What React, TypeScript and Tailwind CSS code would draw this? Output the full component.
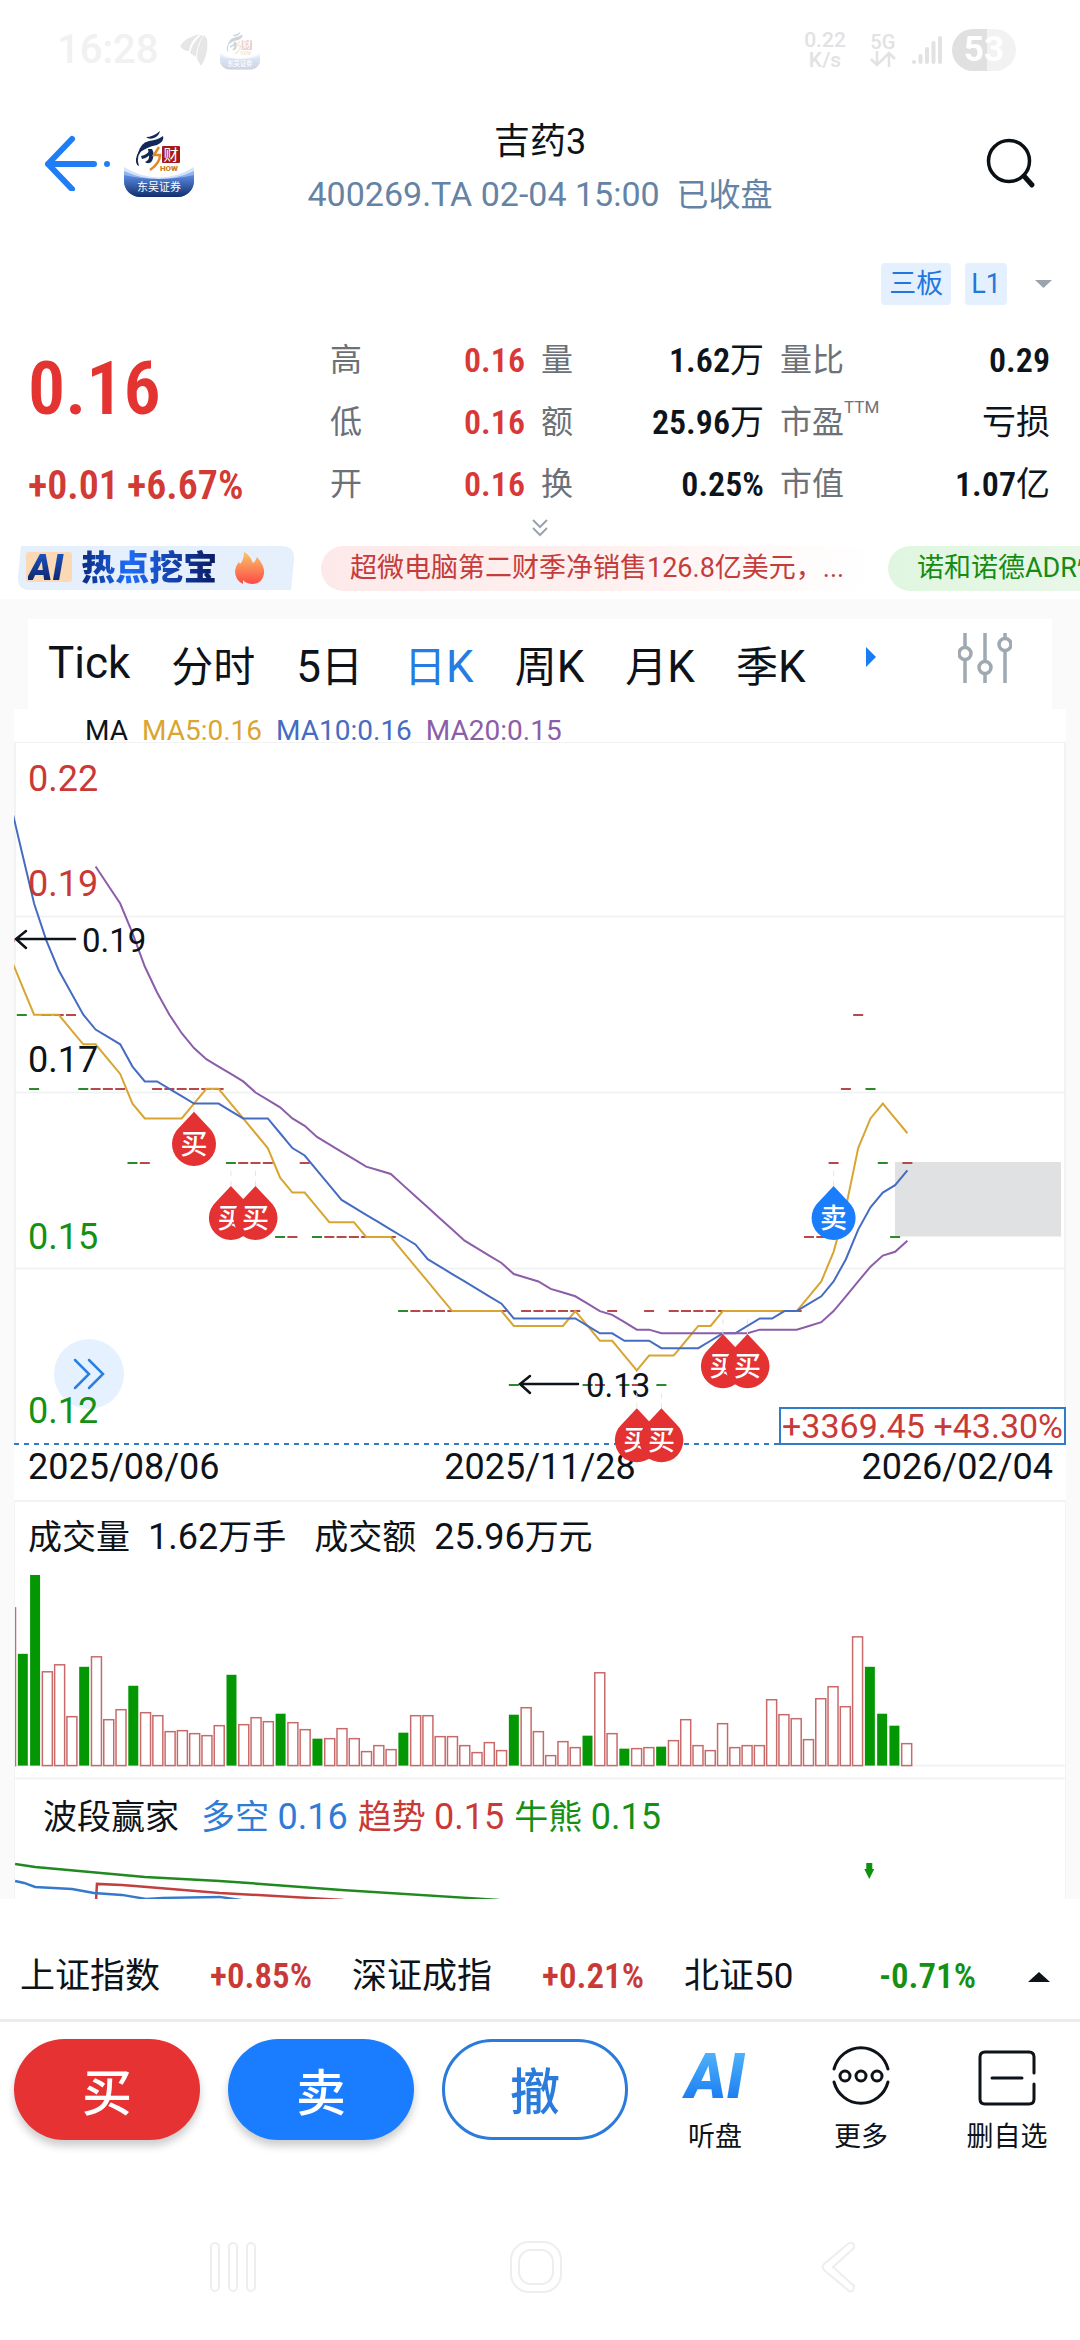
import React from 'react';
import clsx from 'clsx';

const RED = '#c93a37';
const GREEN = '#149114';

// close prices in cents, oldest first; the first 12 are left of the visible area
const CLOSES = [
  22, 22, 24, 25, 24, 23, 22, 21, 20, 19, 18, 18,
  19, 18, 17, 18, 18, 18, 17, 17, 17, 17, 16, 16, 17, 17, 17, 17, 17, 17, 16,
  16, 16, 16, 15, 15, 16, 15, 15, 15, 15, 15, 15, 15, 14, 14, 14, 14, 14, 14,
  14, 14, 14, 13, 14, 14, 14, 14, 14, 13, 13, 14, 13, 13, 14, 13, 14, 14, 14,
  14, 14, 14, 14, 14, 14, 14, 14, 15, 15, 16, 17, 18, 17, 16, 15, 16,
];
const HIDDEN = 12;

const VOLUMES = [
  158, 112, 191, 94, 101, 49, 99, 109, 46, 56, 80, 53, 50, 34, 35, 32, 30, 40,
  91, 41, 48, 44, 52, 43, 36, 27, 27, 37, 27, 14, 20, 16, 33, 50, 50, 29, 29,
  20, 13, 23, 15, 51, 58, 34, 10, 24, 18, 30, 93, 32, 17, 17, 18, 19, 25, 46,
  20, 15, 42, 18, 20, 20, 66, 51, 47, 26, 67, 79, 59, 129, 99, 52, 40, 22,
];
const DOWN_DAYS = [1, 2, 6, 10, 18, 22, 25, 32, 41, 47, 50, 53, 70, 71, 72];

const TRADES = [
  { day: 15, side: '买' },
  { day: 18, side: '买' },
  { day: 20, side: '买' },
  { day: 51, side: '买' },
  { day: 53, side: '买' },
  { day: 58, side: '买' },
  { day: 60, side: '买' },
  { day: 67, side: '卖' },
];

const xOf = (day: number) => day * 12.3 - 4.5;
const yOf = (cents: number) => 272.7 + (18 - cents) * 74.1;
const isDown = (day: number) => DOWN_DAYS.includes(day);

const average = (days: number) => {
  const points: string[] = [];
  for (let i = Math.max(days - 1, HIDDEN); i < CLOSES.length; i++) {
    const sum = CLOSES.slice(i - days + 1, i + 1).reduce((a, b) => a + b, 0);
    points.push(`${xOf(i - HIDDEN)},${yOf(sum / days)}`);
  }
  return points.join(' ');
};

const STATS = [
  { label: '高', value: '0.16', red: true },
  { label: '量', value: '1.62', unit: '万' },
  { label: '量比', value: '0.29' },
  { label: '低', value: '0.16', red: true },
  { label: '额', value: '25.96', unit: '万' },
  { label: '市盈', sup: 'TTM', unit: '亏损' },
  { label: '开', value: '0.16', red: true },
  { label: '换', value: '0.25%' },
  { label: '市值', value: '1.07', unit: '亿' },
];

const TABS = [
  ['', 'Tick', ''],
  ['', '', '分时'],
  ['', '5', '日'],
  ['日', 'K', ''],
  ['周', 'K', ''],
  ['月', 'K', ''],
  ['季', 'K', ''],
];

const INDEXES = [
  { name: '上证指数', change: '+0.85%' },
  { name: '深证成指', change: '+0.21%' },
  { name: '北证50', change: '-0.71%' },
];

const DIN =
  "font-['Roboto_Condensed','Liberation_Sans_Narrow',Roboto,sans-serif] font-semibold";

const AppLogo = ({ className }: { className: string }) => (
  <svg viewBox="0 0 70 70" className={className} aria-hidden="true">
    <defs>
      <linearGradient id="logo" x1="0" y1="0" x2="0" y2="1">
        <stop offset="0" stopColor="#5b8be0" />
        <stop offset="1" stopColor="#0d2a66" />
      </linearGradient>
      <clipPath id="logoClip">
        <rect width="70" height="69" rx="16" />
      </clipPath>
    </defs>
    <g clipPath="url(#logoClip)">
      <path d="M0 39 Q35 60 70 39 V70 H0 Z" fill="#d4e4fb" />
      <path d="M0 43 Q35 59 70 43 V70 H0 Z" fill="#8fb3ef" />
      <path d="M0 47 Q35 55 70 47 V70 H0 Z" fill="url(#logo)" />
    </g>
    <g fill="#10285a">
      <path d="M22 9 Q29 9 36 3 Q35 8 30 10 Q25 12 22 9 Z" />
      <path d="M14 26 Q16 15 25 13 Q34 12 39 8 Q41 13 33 17 Q22 19 14 26 Z" />
      <path d="M21 19 Q11 27 15 38 Q10 36 13 27 Q15 21 24 17 Z" />
      <path d="M24 21 H28 Q31 26 28 33 Q25 37 21 34 Q26 32 25 27 Z" />
      <path d="M17 28 Q23 27 27 21 L28 24 Q24 30 18 31 Z" />
    </g>
    <path d="M35 19 L30 27 H36 Q36 35 26 42" fill="none" stroke="#e08a24" strokeWidth="2.5" />
    <rect x="38" y="18" width="18" height="17" rx="1" fill="#a11b1b" />
    <text x="47" y="32" fontSize="15" textAnchor="middle" fill="#fff">财</text>
    <text x="45" y="43" fontSize="8" fontWeight="900" textAnchor="middle" fill="#c98022">HOW</text>
    <text x="35" y="63" fontSize="11" textAnchor="middle" fill="#fff">东吴证券</text>
  </svg>
);

const StatusBar = () => (
  <div className="flex h-[100px] items-center pl-[57px] pr-16 font-medium text-[#e2e2e2]">
    <span className="text-[40px] text-[#f1f1f1]">16:28</span>
    <svg viewBox="0 0 28 32" className="ml-[22px] h-8 w-7" fill="#e6e6e6">
      <path d="M0 12 Q6 3 20 0 Q10 7 9 17 Q3 17 0 12 Z" />
      <path d="M21 1 Q12 9 10 19 L16 23 Q17 10 23 2 Z" />
      <path d="M24 1 Q17 12 17 25 L21 32 Q29 20 27 5 Z" />
    </svg>
    <AppLogo className="ml-3 h-10 w-10 opacity-20" />
    <div className="ml-auto flex items-center">
      <div className="text-center text-[21px] leading-[20px]">
        0.22
        <br />
        K/s
      </div>
      <div className="ml-6 flex flex-col items-center">
        <span className="text-[20px] leading-[18px]">5G</span>
        <svg viewBox="0 0 26 16" className="h-4 w-[26px]" fill="none" stroke="currentColor" strokeWidth="2.5">
          <path d="M7 0 V14 M1 8 L7 14 L13 8 M19 16 V2 M13 8 L19 2 L25 8" />
        </svg>
      </div>
      <svg viewBox="0 0 30 30" className="ml-4 h-[30px] w-[30px]" stroke="currentColor" strokeWidth="4" strokeLinecap="round">
        <path d="M2 27 V27 M8.500 21 V27 M15 14 V27 M21.500 8 V27 M28 3 V27" />
      </svg>
      <div className="ml-2.5 rounded-full bg-linear-to-r from-[#e0e0e0] from-54% to-[#f2f2f2] to-54% px-3 text-[35px] leading-[42px] font-bold text-white">
        53
      </div>
    </div>
  </div>
);

const Header = () => (
  <header className="flex items-start justify-between px-[44px]">
    <div className="flex w-[200px] items-center pt-7">
      <button aria-label="返回">
        <svg viewBox="0 0 66 56" className="h-14 w-[66px]" fill="none" stroke="#1f7ef6" strokeWidth="6" strokeLinecap="round" strokeLinejoin="round">
          <path d="M28 4 L4 29 L28 54 M4 29 H50 M63 29 V29" />
        </svg>
      </button>
      <AppLogo className="ml-[14px] h-[70px] w-[70px]" />
    </div>
    <div className="flex flex-col items-center pt-4">
      <h1 className="text-4xl leading-[52px]">吉药3</h1>
      <div className="text-[34px] leading-[52px] whitespace-pre text-[#6583a4]">
        400269.TA 02-04 15:00{'  '}
        <span className="text-[32px]">已收盘</span>
      </div>
    </div>
    <div className="flex w-[200px] justify-end pt-9">
      <button aria-label="搜索">
        <svg viewBox="0 0 54 54" className="h-[54px] w-[54px]" fill="none" stroke="#0b1014" strokeWidth="3.500" strokeLinecap="round">
          <circle cx="27" cy="25" r="20.500" />
          <path d="M42 40 L50 49" strokeWidth="5" />
        </svg>
      </button>
    </div>
  </header>
);

const Quote = () => (
  <section>
    <div className="flex items-center justify-end gap-3.5 pt-[42px] pr-7 text-[27px] leading-[42px] text-[#2377dc]">
      <span className="rounded-sm bg-[#e5f0ff] px-2">三板</span>
      <span className="rounded-sm bg-[#e5f0ff] px-1.5">L1</span>
      <button aria-label="展开" className="ml-[14px]">
        <svg viewBox="0 0 17 8" className="h-2 w-[17px]">
          <path d="M0 0 H17 L8.500 8 Z" fill="#9ba4ae" />
        </svg>
      </button>
    </div>
    <div className="flex pt-6 pr-[30px] pl-7">
      <div className="w-[302px] text-[#e43432]">
        <div className={clsx(DIN, 'text-[74px] leading-[120px]')}>0.16</div>
        <div className={clsx(DIN, 'flex gap-2 pt-3 text-[40px] leading-[50px] text-[#d23a36]')}>
          <span>+0.01</span>
          <span>+6.67%</span>
        </div>
      </div>
      <div className="grid flex-1 grid-cols-[195fr_223fr_270fr] gap-x-4 text-[34px] leading-[62px]">
        {STATS.map((stat, index) => (
          <div key={index} className="flex justify-between">
            <span className="text-[32px] text-[#6c7177]">
              {stat.label}
              {stat.sup && <sup className="-top-5 text-[17px] leading-none">{stat.sup}</sup>}
            </span>
            <span className={clsx('whitespace-nowrap', stat.red ? 'text-[#d93936]' : 'text-[#0e141b]')}>
              <span className={DIN}>{stat.value}</span>
              {stat.unit}
            </span>
          </div>
        ))}
      </div>
    </div>
    <div className="flex h-[31px] items-start justify-center pt-1">
      <svg viewBox="0 0 16 18" className="h-[18px] w-4" fill="none" stroke="#9ba4ae" strokeWidth="2">
        <path d="M1 1 L8 8 L15 1 M1 9 L8 16 L15 9" />
      </svg>
    </div>
  </section>
);

const News = () => (
  <div className="flex h-[53px] items-start overflow-hidden pl-[18px]">
    <a href="#ai" className="relative mr-[27px] flex h-11 w-[276px] shrink-0 items-center pl-2.5">
      <svg viewBox="0 0 276 44" className="absolute inset-0 h-full w-full">
        <path d="M3 0 H264 Q277 0 276 14 L273 44 H12 Q-1 44 0 31 Z" fill="#e6effc" />
        <rect x="8" y="6" width="46" height="30" rx="3" fill="#fbd9b4" />
      </svg>
      <span className="relative bg-linear-to-b from-[#1e5fd8] to-[#0a1a55] bg-clip-text pr-1 text-[37px] leading-[44px] font-black text-transparent italic">
        AI
      </span>
      <span className="relative ml-3.5 bg-linear-to-r from-[#0c2a7e] via-[#1f6dfa] via-35% to-[#0a1a60] bg-clip-text text-[34px] leading-[40px] font-black text-transparent">
        热点挖宝
      </span>
      <svg viewBox="0 0 30 32" className="relative ml-[18px] h-8 w-[30px]">
        <defs>
          <linearGradient id="flame" x1="0" y1="0" x2="0" y2="1">
            <stop offset="0" stopColor="#fcc56a" />
            <stop offset="1" stopColor="#fb4b45" />
          </linearGradient>
        </defs>
        <path d="M9 0 Q15 3 18 11 Q21 9 22 5 Q30 14 29 22 Q27 32 17 32 Q10 31 8 28 L8 32 Q0 28 0 19 Q1 13 4 10 L5 12 Q9 8 9 0 Z" fill="url(#flame)" />
      </svg>
    </a>
    <a href="#news1" className="mr-[14px] w-[553px] shrink-0 rounded-full bg-linear-to-r from-[#fde9ea] via-[#fef0ef] to-white pl-[29px] text-[27px] leading-[45px] whitespace-nowrap text-[#c53c3b]">
      超微电脑第二财季净销售126.8亿美元，...
    </a>
    <a href="#news2" className="w-[400px] shrink-0 rounded-full bg-linear-to-r from-[#e0f6e0] to-[#f2f8f2] pl-[29px] text-[27px] leading-[45px] whitespace-nowrap text-[#158c15]">
      诺和诺德ADR快讯
    </a>
  </div>
);

const Tabs = () => (
  <nav className="mx-7 flex h-[90px] items-start bg-white pr-10 pl-5 text-[#0d1319]">
    <div className="flex gap-[41px] pt-2.5">
      {TABS.map(([before, latin, after]) => (
        <button
          key={before + latin + after}
          className={clsx(
            'text-[42px] leading-[60px] whitespace-nowrap',
            before === '日' && 'text-[#267ce2]',
            latin !== 'Tick' && 'pt-2',
          )}
        >
          {before}
          <span className="text-[44px]">{latin}</span>
          {after}
        </button>
      ))}
    </div>
    <svg viewBox="0 0 10 20" className="mt-7 ml-[60px] h-5 w-2.5">
      <path d="M0 0 L10 10 L0 20 Z" fill="#1a7cf5" />
    </svg>
    <button aria-label="设置" className="mt-3.5 ml-auto">
      <svg viewBox="0 0 54 50" className="h-[50px] w-[54px]" fill="none" stroke="#9fa9b2" strokeWidth="3.500">
        <path d="M7 0 V14 M7 27 V50 M27 0 V28 M27 41 V50 M47 0 V5 M47 18 V50" />
        <circle cx="7" cy="20.500" r="6" />
        <circle cx="27" cy="34.500" r="6" />
        <circle cx="47" cy="11.500" r="6" />
      </svg>
    </button>
  </nav>
);

const PriceChart = () => (
  <div className="relative">
    <button
      aria-label="更多数据"
      className="absolute top-[597px] left-10 flex h-[70px] w-[70px] items-center justify-center rounded-full bg-[#e5f1fe]"
    >
      <svg viewBox="0 0 32 32" className="h-8 w-8" fill="none" stroke="#2a7fe0" strokeWidth="2.500" strokeLinecap="round">
        <path d="M2 2 L16 16 L2 30 M16 2 L30 16 L16 30" />
      </svg>
    </button>
    <svg viewBox="0 0 1052 758" className="pointer-events-none relative block w-full" fontFamily="Roboto">
      <g stroke="#eff0f1" strokeWidth="1.500" fill="none">
        <path d="M1 702 V0 H1051 V702 M0 174.500 H1052 M0 350.500 H1052 M0 526.500 H1052" />
      </g>
      <rect x="881" y="420" width="166" height="74.500" fill="#e0e1e3" />
      {CLOSES.slice(HIDDEN).map((close, day) => (
        <rect
          key={day}
          x={xOf(day) - 5}
          y={Math.round(yOf(close)) - 1}
          width="10"
          height="2"
          fill={isDown(day) ? '#2c8a2c' : '#b8494a'}
        />
      ))}
      <path d="M0 702 H765" stroke="#2f7cc8" strokeWidth="2" strokeDasharray="5 5" />
      <g fill="none" strokeWidth="2">
        <polyline points={average(5)} stroke="#d8a533" />
        <polyline points={average(10)} stroke="#466cc2" />
        <polyline points={average(20)} stroke="#8c5da8" />
      </g>
      <g fontSize="36" fill="#0d1319">
        <text x="14" y="49" fill={RED}>0.22</text>
        <text x="14" y="154" fill={RED}>0.19</text>
        <text x="14" y="330">0.17</text>
        <text x="14" y="507" fill={GREEN}>0.15</text>
        <text x="14" y="681" fill={GREEN}>0.12</text>
        <text x="14" y="737">2025/08/06</text>
        <text x="526" y="737" textAnchor="middle">2025/11/28</text>
        <text x="1039" y="737" textAnchor="end">2026/02/04</text>
      </g>
      <g stroke="#0d1319" strokeWidth="2.500" fill="none" strokeLinecap="round">
        <path d="M61 197 H3 M12 189 L2 197 L12 206" />
        <path d="M564 642 H508 M516 634 L506 642 L516 651" />
      </g>
      <g fontSize="33" fill="#0d1319">
        <text x="68" y="210">0.19</text>
        <text x="572" y="655">0.13</text>
      </g>
      {TRADES.map(({ day, side }) => {
        const x = xOf(day);
        const y = yOf(CLOSES[day + HIDDEN]) + 23;
        return (
          <g key={day}>
            <path d={`M${x} ${y - 15} V${y}`} stroke="#e4e4e4" strokeDasharray="5 5" />
            <path
              d={`M${x} ${y} L${x + 15} ${y + 16} A22 22 0 1 1 ${x - 15} ${y + 16} Z`}
              fill={side === '买' ? '#e43232' : '#1a7dfb'}
            />
            <text
              x={x}
              y={y + 42}
              fontSize="27"
              fontWeight="500"
              fontFamily="Noto Sans CJK SC"
              textAnchor="middle"
              fill="#fff"
            >
              {side}
            </text>
          </g>
        );
      })}
      <rect x="766" y="666" width="285" height="36" fill="#fff" stroke="#2f7cc8" strokeWidth="2" />
      <text x="1049" y="696" fontSize="34" textAnchor="end" fill={RED}>
        +3369.45 +43.30%
      </text>
    </svg>
  </div>
);

const VolumeChart = () => (
  <div className="border-x border-t-2 border-[#f2f3f3]">
    <div className="flex items-center gap-[18px] pt-2.5 pl-[13px] text-[34px] leading-[50px] whitespace-nowrap text-[#0d1319]">
      <span>成交量</span>
      <span>
        <span className="text-4xl">1.62</span>万手
      </span>
      <span className="ml-[10px]">成交额</span>
      <span>
        <span className="text-4xl">25.96</span>万元
      </span>
    </div>
    <svg viewBox="0 0 1052 218" className="block w-full">
      <path d="M0 204 H1052 M0 217 H1052" stroke="#f2f3f3" strokeWidth="2" />
      {VOLUMES.map((volume, day) =>
        isDown(day) ? (
          <rect key={day} x={xOf(day) - 5} y={204 - volume} width="10" height={volume} fill="#039803" />
        ) : (
          <rect
            key={day}
            x={xOf(day) - 5}
            y={204 - volume}
            width="10"
            height={volume}
            fill="none"
            stroke="#c96a6a"
            strokeWidth="1.500"
          />
        ),
      )}
    </svg>
  </div>
);

const WaveChart = () => (
  <div className="border-x border-[#f2f3f3]">
    <div className="flex items-center gap-2.5 pt-3 pl-7 text-[34px] leading-[50px] whitespace-nowrap">
      <span className="mr-3 text-[#0d1319]">波段赢家</span>
      <span className="text-[#2f7cd8]">
        多空 <span className="text-4xl">0.16</span>
      </span>
      <span className="text-[#c93a37]">
        趋势 <span className="text-4xl">0.15</span>
      </span>
      <span className="text-[#149114]">
        牛熊 <span className="text-4xl">0.15</span>
      </span>
    </div>
    <svg viewBox="0 0 1052 58" className="block w-full" fill="none" strokeWidth="2.500">
      <polyline points="0,22 20,25 130,35 205,39 327,48 485,58" stroke="#1f8a1f" />
      <polyline points="81,60 82,42 107,43 120,44 205,51 329,58" stroke="#c23f3f" />
      <polyline points="0,39 9,41 20,45 57,47 79,51 107,53 131,57 148,56 205,55 232,59" stroke="#3579cc" />
      <path d="M853 21 H859 V27 H861 L856 37 L851 27 H853 Z" fill="#0c930c" />
    </svg>
  </div>
);

const BottomBar = () => (
  <footer>
    <div className="flex items-center gap-10 pt-12 pr-[30px] pb-3 pl-5">
      {INDEXES.map((item) => (
        <div key={item.name} className="flex flex-1 items-center justify-between text-[35px] leading-[60px] whitespace-nowrap text-[#0d1319]">
          <span>{item.name}</span>
          <span className={clsx(DIN, item.change[0] === '-' ? 'text-[#149114]' : 'text-[#c93a37]')}>
            {item.change}
          </span>
        </div>
      ))}
      <svg viewBox="0 0 22 10" className="ml-3 h-2.5 w-[22px]">
        <path d="M0 10 L11 0 L22 10 Z" fill="#0d1319" />
      </svg>
    </div>
    <div className="flex border-t-[3px] border-[#ebecec] pt-[17px] pl-[14px] text-[50px] leading-[94px] font-medium">
      <button className="mr-7 h-[101px] w-[186px] rounded-full bg-[#e63232] pt-2 text-white shadow-[0_6px_8px_rgba(0,0,0,0.2)]">买</button>
      <button className="mr-7 h-[101px] w-[186px] rounded-full bg-[#1a7dff] pt-2 text-white shadow-[0_6px_8px_rgba(0,0,0,0.2)]">卖</button>
      <button className="h-[101px] w-[186px] rounded-full border-[3px] border-[#2a7bdb] pt-1 text-[#2a7bdb]">撤</button>
      <div className="ml-[14px] grid flex-1 grid-cols-3 text-[27px] leading-[36px] font-normal text-[#0d1319]">
        <button className="flex flex-col items-center gap-1">
          <span className="bg-linear-to-b from-[#5cc1fb] to-[#0d68ee] bg-clip-text px-2 text-[62px] leading-[76px] font-black text-transparent italic">
            AI
          </span>
          听盘
        </button>
        <button className="flex flex-col items-center gap-1">
          <svg viewBox="0 0 76 76" className="h-[76px] w-[76px]" fill="none" stroke="#0d1319" strokeWidth="3">
            <path d="M11 30 A28 29 0 0 1 65 30 M11 43 A28 29 0 0 0 65 43" strokeLinecap="round" />
            <circle cx="22" cy="37" r="5" />
            <circle cx="38" cy="37" r="5" />
            <circle cx="54" cy="37" r="5" />
          </svg>
          更多
        </button>
        <button className="flex flex-col items-center gap-1">
          <svg viewBox="0 0 76 76" className="h-[76px] w-[76px]" fill="none" stroke="#0d1319" strokeWidth="3" strokeLinecap="round">
            <path d="M65 34 V18 Q65 13 60 13 H16 Q11 13 11 18 V60 Q11 65 16 65 H60 Q65 65 65 60 V45" />
            <path d="M23 39 H53" />
          </svg>
          删自选
        </button>
      </div>
    </div>
    <div className="flex justify-around pt-[86px] pr-[90px] pb-[41px] pl-[81px]">
      <svg viewBox="0 0 52 52" className="h-[52px] w-[52px]" fill="none" stroke="#eeeeee" strokeWidth="2">
        <rect x="4" y="2" width="8" height="48" rx="4" />
        <rect x="22" y="2" width="8" height="48" rx="4" />
        <rect x="40" y="2" width="8" height="48" rx="4" />
      </svg>
      <svg viewBox="0 0 52 52" className="h-[52px] w-[52px]" fill="none" stroke="#eeeeee" strokeWidth="2">
        <rect x="1" y="1" width="50" height="50" rx="18" />
        <rect x="9" y="9" width="34" height="34" rx="12" />
      </svg>
      <svg viewBox="0 0 52 52" className="h-[52px] w-[52px]" fill="none" stroke="#eeeeee" strokeWidth="2">
        <path d="M36 2 L11 23 Q8 26 11 29 L36 50 Q41 52 41 45 L20 26 L41 7 Q42 1 36 2 Z" />
      </svg>
    </div>
  </footer>
);

const App: React.FC = () => {
  return (
    <div className="overflow-hidden bg-white font-[Roboto,'Noto_Sans_CJK_SC',sans-serif] text-[#0d1319]">
      <StatusBar />
      <Header />
      <Quote />
      <News />
      <main className="bg-[#fafafa] pt-5">
        <Tabs />
        <div className="mx-3.5 bg-white">
          <div className="flex h-[33px] gap-3.5 pl-[71px] text-[28px] leading-[44px]">
            <span>MA</span>
            <span className="text-[#daa530]">MA5:0.16</span>
            <span className="text-[#466cc2]">MA10:0.16</span>
            <span className="text-[#8c5da8]">MA20:0.15</span>
          </div>
          <PriceChart />
          <VolumeChart />
          <WaveChart />
        </div>
      </main>
      <BottomBar />
    </div>
  );
};

export default App;
